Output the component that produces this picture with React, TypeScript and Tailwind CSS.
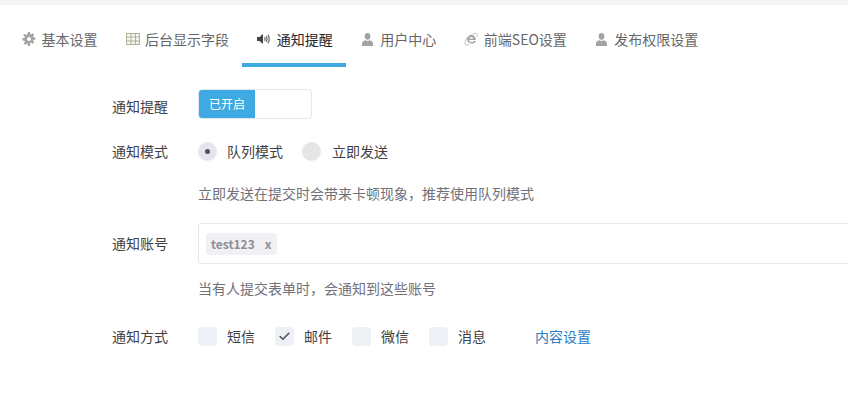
import { Check } from "lucide-react";
import { ReactNode } from "react";

function GearIcon() {
  return (
    <svg width="14" height="14" viewBox="0 0 14 14" fill="#a3a3a3">
      <path fillRule="evenodd" d="M6 0h2l.3 2 1 .4 1.6-1.200 1.400 1.400-1.200 1.600.4 1 2 .3v2l-2 .3-.4 1 1.200 1.600-1.400 1.400-1.600-1.200-1 .4L8 14H6l-.3-2-1-.4-1.600 1.200-1.400-1.400 1.200-1.600-.4-1-2-.3V6l2-.3.4-1L1.100 3.100l1.400-1.400 1.600 1.200 1-.4zM7 5a2 2 0 1 0 0 4 2 2 0 0 0 0-4z" />
    </svg>
  );
}

function TableIcon() {
  return (
    <svg width="14" height="12" viewBox="0 0 14 12" fill="none" stroke="#a9b59a" strokeWidth="1">
      <rect x="0.5" y="0.5" width="13" height="11" fill="#f4f6ee" />
      <path d="M0.500 4h13M0.500 8h13M5 0.500v11M9.500 0.500v11" />
    </svg>
  );
}

function VolumeIcon() {
  return (
    <svg width="14" height="12" viewBox="0 0 14 12" fill="none">
      <path d="M0 4h2.500L6 1v10L2.500 8H0z" fill="#444" />
      <path d="M7.500 4.200c.6 1 .6 2.600 0 3.600M9.200 3c1 1.800 1 4.200 0 6M11 1.800c1.500 2.600 1.500 5.800 0 8.400" stroke="#666" strokeWidth="1.200" />
    </svg>
  );
}

function UserIcon() {
  return (
    <svg width="11" height="13" viewBox="0 0 11 13" fill="#a3a3a3">
      <ellipse cx="5.500" cy="3.400" rx="2.800" ry="3.300" />
      <path d="M0 13v-2.500C0 8.800 1.500 7.800 3.200 7.300c1.400.8 3.200.8 4.600 0C9.500 7.800 11 8.800 11 10.500V13z" />
    </svg>
  );
}

function IeIcon() {
  return (
    <svg width="15" height="15" viewBox="0 0 15 15" fill="none">
      <path d="M7.800 2.500a5 5 0 0 1 4.800 5.600H5.400c.2 2.500 3.600 3 5 .9h2.300c-1.500 3.800-7.400 3.800-9.100.2C2.500 6.500 4.500 2.700 7.800 2.500zM5.400 6.500h4.700C10 4.100 5.800 4.100 5.400 6.500z" fill="#a3a3a3" />
      <path d="M3.500 5C1.500 8 .3 11.500 1.300 13c.8 1 2.500.6 4.200-.5M9 2.300c2-1.200 4-1.800 5-1 .8.700.5 2-.3 3.500" stroke="#b5b5b5" strokeWidth="0.900" />
    </svg>
  );
}

const tabs = [
  { label: "基本设置", icon: <GearIcon /> },
  { label: "后台显示字段", icon: <TableIcon /> },
  { label: "通知提醒", icon: <VolumeIcon />, active: true },
  { label: "用户中心", icon: <UserIcon /> },
  { label: "前端SEO设置", icon: <IeIcon /> },
  { label: "发布权限设置", icon: <UserIcon /> },
];

function Row({
  label,
  children,
  className,
  labelClass,
}: {
  label: string;
  children: ReactNode;
  className?: string;
  labelClass?: string;
}) {
  return (
    <div className={`flex items-center ${className ?? ""}`}>
      <div className={`w-[86px] text-[14px] text-[#3f3f46] ${labelClass ?? ""}`}>{label}</div>
      {children}
    </div>
  );
}

function CheckItem({ label, checked }: { label: string; checked?: boolean }) {
  return (
    <div className="flex items-center">
      <span className="flex h-[19px] w-[19px] items-center justify-center rounded-[4px] bg-[#edf1f5]">
        {checked && <Check size={13} strokeWidth={3} className="text-[#52525b]" />}
      </span>
      <span className="ml-[10px] text-[14px] text-[#3f3f46]">{label}</span>
    </div>
  );
}

export default function App() {
  return (
    <div className="h-[408px] w-[848px] overflow-hidden bg-white font-['Noto_Sans_CJK_SC','Liberation_Sans',sans-serif]">
      <div className="h-[5px] bg-[#f3f4f6]" />
      <div className="flex h-[62px] pl-[7px]">
        {tabs.map((tab) => (
          <div
            key={tab.label}
            className={`flex items-center gap-[5.4px] border-b-4 pt-[10px] pr-[13.1px] pl-[15.1px] text-[14px] ${
              tab.active ? "border-[#3fa9e2] text-[#27272a]" : "border-transparent text-[#666666]"
            }`}
          >
            <span className="flex w-[14px] justify-center">{tab.icon}</span>
            {tab.label}
          </div>
        ))}
      </div>

      <div className="pl-[112px]">
        <Row label="通知提醒" className="mt-[22px]" labelClass="pt-[4px]">
          <div className="flex h-[30px] w-[114px] overflow-hidden rounded-[4px] border border-[#e4e7ef]">
            <div className="flex w-[56px] items-center justify-center bg-[#3fa9e2] text-[12px] text-white">已开启</div>
          </div>
        </Row>

        <Row label="通知模式" className="mt-[22px]">
          <span className="flex h-[19px] w-[19px] items-center justify-center rounded-full bg-[#e4e6ef]">
            <span className="h-[5px] w-[5px] rounded-full bg-[#52525b]" />
          </span>
          <span className="ml-[10px] text-[14px] text-[#3f3f46]">队列模式</span>
          <span className="ml-[19px] h-[19px] w-[19px] rounded-full bg-[#e5e5e5]" />
          <span className="ml-[11px] text-[14px] text-[#3f3f46]">立即发送</span>
        </Row>

        <div className="mt-[21px] pl-[86px] text-[14px] text-[#71717a]">立即发送在提交时会带来卡顿现象，推荐使用队列模式</div>

        <Row label="通知账号" className="mt-[19px]">
          <div className="flex h-[41px] flex-1 items-center rounded-l-[4px] border border-r-0 border-[#e4e7ef] pl-[7px]">
            <span className="flex h-[22px] items-center gap-[10px] rounded-[3px] bg-[#f0f1f5] px-[5px] text-[12px] font-bold text-[#8f8f96]">
              <span>test123</span>
              <span>x</span>
            </span>
          </div>
        </Row>

        <div className="mt-[14px] pl-[86px] text-[14px] text-[#71717a]">当有人提交表单时，会通知到这些账号</div>

        <Row label="通知方式" className="mt-[27px]">
          <div className="flex items-center gap-[20px]">
            <CheckItem label="短信" />
            <CheckItem label="邮件" checked />
            <CheckItem label="微信" />
            <CheckItem label="消息" />
          </div>
          <span className="ml-[49px] text-[14px] text-[#2b7cc4]">内容设置</span>
        </Row>
      </div>
    </div>
  );
}
